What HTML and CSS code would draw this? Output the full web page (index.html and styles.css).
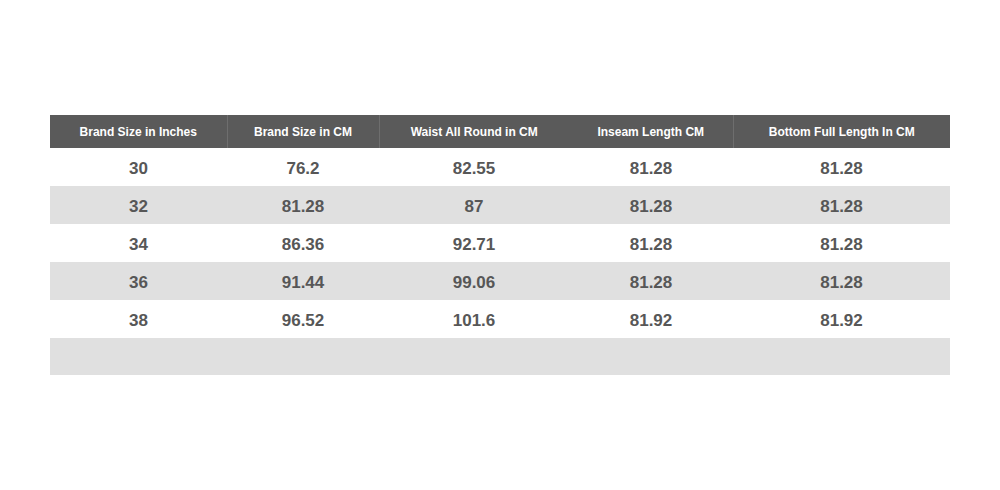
FILE: index.html
```html
<!DOCTYPE html>
<html>
<head>
<meta charset="utf-8">
<link rel="stylesheet" href="styles.css">
</head>
<body>
<div class="page">
<table class="size-table">
  <colgroup>
    <col class="c1"><col class="c2"><col class="c3"><col class="c4"><col class="c5">
  </colgroup>
  <thead>
    <tr>
      <th class="sep">Brand Size in Inches</th>
      <th class="sep">Brand Size in CM</th>
      <th>Waist All Round in CM</th>
      <th class="sep">Inseam Length CM</th>
      <th>Bottom Full Length In CM</th>
    </tr>
  </thead>
  <tbody>
    <tr><td>30</td><td>76.2</td><td>82.55</td><td>81.28</td><td>81.28</td></tr>
    <tr class="alt"><td>32</td><td>81.28</td><td>87</td><td>81.28</td><td>81.28</td></tr>
    <tr><td>34</td><td>86.36</td><td>92.71</td><td>81.28</td><td>81.28</td></tr>
    <tr class="alt"><td>36</td><td>91.44</td><td>99.06</td><td>81.28</td><td>81.28</td></tr>
    <tr><td>38</td><td>96.52</td><td>101.6</td><td>81.92</td><td>81.92</td></tr>
    <tr class="alt empty"><td></td><td></td><td></td><td></td><td></td></tr>
  </tbody>
</table>
</div>
</body>
</html>
```

FILE: styles.css
```css
html, body {
  margin: 0;
  padding: 0;
  background: #ffffff;
}
.page {
  padding: 115px 50px 0 50px;
}
.size-table {
  width: 900px;
  border-collapse: collapse;
  table-layout: fixed;
  font-family: "Liberation Sans", Arial, sans-serif;
}
.c1 { width: 177px; }
.c2 { width: 152px; }
.c3 { width: 190px; }
.c4 { width: 164px; }
.c5 { width: 217px; }
.size-table th {
  background: #5a5a5a;
  color: #ffffff;
  font-size: 12px;
  font-weight: bold;
  height: 33px;
  padding: 0;
  text-align: center;
  vertical-align: middle;
}
.size-table th.sep {
  border-right: 1px solid #6e6e6e;
}
.size-table td {
  color: #575757;
  font-size: 17px;
  font-weight: bold;
  height: 35px;
  padding: 3px 0 0 0;
  text-align: center;
  vertical-align: middle;
}
.size-table tr.alt td {
  background: #e0e0e0;
}
.size-table tr.empty td {
  height: 34px;
}
```
